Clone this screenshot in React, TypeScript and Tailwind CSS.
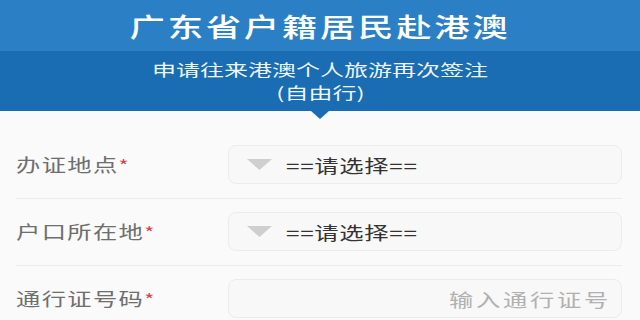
import React from "react";

const font = "font-['Noto_Sans_CJK_SC','Noto_Sans',sans-serif]";

function Label({ text }: { text: string }) {
  return (
    <div className="w-[212px] shrink-0">
      <span className="inline-block origin-left scale-x-[1.35] text-[18px] tracking-[1px] text-[#6e6e6e] leading-none">
        {text}
        <span className="text-[#d8434b] text-[16px]">*</span>
      </span>
    </div>
  );
}

function SelectBox() {
  return (
    <div className="flex-1 h-[39px] rounded-[8px] border border-[#ececec] bg-[#f8f8f8] flex items-center pl-[18px]">
      <svg width="25" height="11" viewBox="0 0 25 11" className="shrink-0">
        <polygon points="0,0 25,0 12.5,11" fill="#cfcfcf" />
      </svg>
      <span className="ml-[14px] inline-block origin-left scale-x-[1.35] text-[18px] tracking-[0.5px] text-[#333333] leading-none">
        ==请选择==
      </span>
    </div>
  );
}

function InputBox() {
  return (
    <div className="flex-1 h-[39px] rounded-[8px] border border-[#ececec] bg-[#f8f8f8] flex items-center justify-end pr-[10px]">
      <span className="inline-block origin-right scale-x-[1.35] text-[18px] tracking-[2px] text-[#b0b0b0] leading-none">
        输入通行证号
      </span>
    </div>
  );
}

export default function App() {
  return (
    <div className={`w-[640px] h-[320px] overflow-hidden bg-[#fafafa] ${font}`}>
      <div className="h-[51px] bg-[#2b80c5] flex items-center justify-center">
        <span className="inline-block scale-x-[1.36] text-white text-[26px] tracking-[2px] font-medium leading-none">
          广东省户籍居民赴港澳
        </span>
      </div>
      <div className="relative h-[60px] bg-[#1a6db3] flex flex-col items-center justify-center text-white/95 text-[16px]">
        <span className="inline-block scale-x-[1.5] leading-[23px]">申请往来港澳个人旅游再次签注</span>
        <span className="inline-block scale-x-[1.5] leading-[23px]">(自由行)</span>
        <div className="absolute left-1/2 top-full -translate-x-1/2 w-0 h-0 border-x-[9px] border-x-transparent border-t-[8px] border-t-[#1a6db3]" />
      </div>
      <div className="pl-[16px] pr-[18px] pt-[34px]">
        <div className="flex items-center">
          <Label text="办证地点" />
          <SelectBox />
        </div>
        <div className="mt-[14px] mb-[13px] h-px bg-[#ececec]" />
        <div className="flex items-center">
          <Label text="户口所在地" />
          <SelectBox />
        </div>
        <div className="mt-[14px] mb-[13px] h-px bg-[#ececec]" />
        <div className="flex items-center">
          <Label text="通行证号码" />
          <InputBox />
        </div>
      </div>
    </div>
  );
}
